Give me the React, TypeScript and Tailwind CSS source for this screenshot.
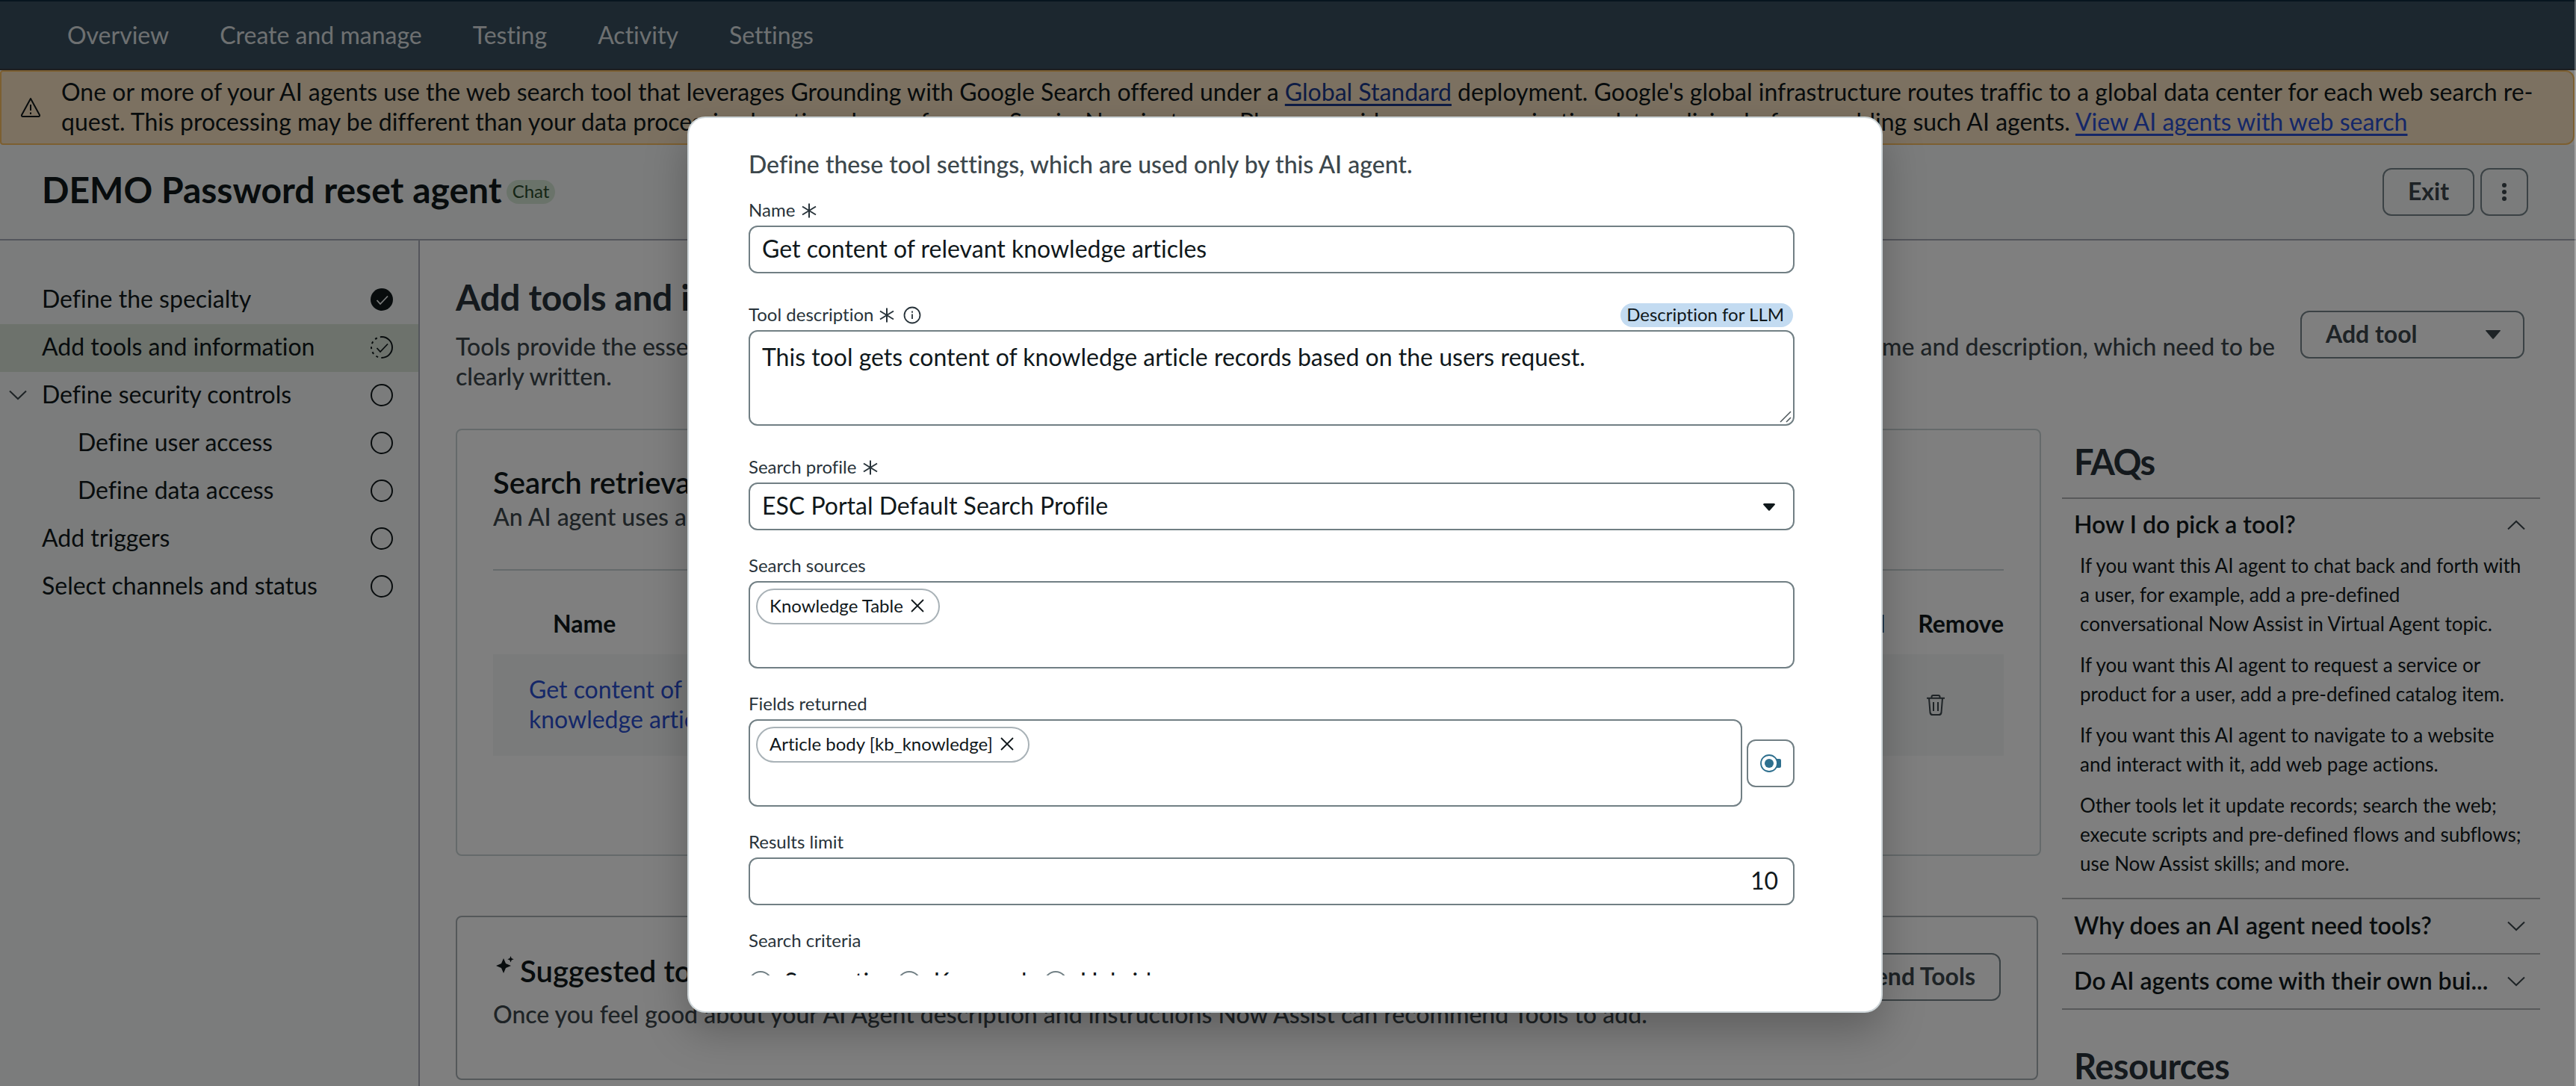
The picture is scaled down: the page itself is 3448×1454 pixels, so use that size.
import type { ReactNode } from "react";
import clsx from "clsx";

const NAV_ITEMS = ["Overview", "Create and manage", "Testing", "Activity", "Settings"];

type StepStatus = "done" | "current" | "todo";

const STEPS: { label: string; status: StepStatus; child?: boolean; expandable?: boolean }[] = [
	{ label: "Define the specialty", status: "done" },
	{ label: "Add tools and information", status: "current" },
	{ label: "Define security controls", status: "todo", expandable: true },
	{ label: "Define user access", status: "todo", child: true },
	{ label: "Define data access", status: "todo", child: true },
	{ label: "Add triggers", status: "todo" },
	{ label: "Select channels and status", status: "todo" },
];

const FAQ_ANSWER = [
	["If you want this AI agent to chat back and forth with", "a user, for example, add a pre-defined", "conversational Now Assist in Virtual Agent topic."],
	["If you want this AI agent to request a service or", "product for a user, add a pre-defined catalog item."],
	["If you want this AI agent to navigate to a website", "and interact with it, add web page actions."],
	["Other tools let it update records; search the web;", "execute scripts and pre-defined flows and subflows;", "use Now Assist skills; and more."],
];

function StatusIcon({ status }: { status: StepStatus }) {
	return (
		<svg className="size-[30px]" viewBox="0 0 30 30" fill="none">
			{status === "done" && <circle cx="15" cy="15" r="15" fill="#10181b" />}
			{status === "todo" && <circle cx="15" cy="15" r="14" stroke="#10181b" strokeWidth="2" />}
			{status === "current" && (
				<>
					<path d="M15 1a14 14 0 0 1 0 28" stroke="#10181b" strokeWidth="2" />
					<path d="M15 29a14 14 0 0 1 0-28" stroke="#10181b" strokeWidth="2" strokeDasharray="3 4.3" strokeDashoffset="-5" />
				</>
			)}
			{status !== "todo" && (
				<path d="M8.500 16l4.500 5 10-10.500" stroke={status === "done" ? "#f6f9f8" : "#10181b"} strokeWidth="1.800" />
			)}
		</svg>
	);
}

function Chevron({ up = false }: { up?: boolean }) {
	return (
		<svg className={clsx("h-3.5 w-6 shrink-0", up && "rotate-180")} viewBox="0 0 24 14" fill="none">
			<path d="M1 1.500l11 10.500 11-10.500" stroke="#3c474c" strokeWidth="2" />
		</svg>
	);
}

function Asterisk() {
	return (
		<svg className="mt-px size-5" viewBox="0 0 20 20" fill="none" stroke="#28333a" strokeWidth="2">
			<path d="M10 .5v19M1 4.500l18 11M19 4.500l-18 11" />
		</svg>
	);
}

function Header() {
	return (
		<>
			<nav className="flex h-[94px] items-center gap-[68px] border-y-2 border-t-[#0e2a3e] border-b-[#363b3f] bg-[#384f5e] pl-[90px] text-[32px] text-[#dce0e3]">
				{NAV_ITEMS.map((item) => (
					<span key={item}>{item}</span>
				))}
			</nav>
			<div className="mr-0.5 flex h-[100px] items-center rounded-l-sm rounded-r-xl border-2 border-[#f9bf63] bg-[#f9e3c3] pl-[25px] text-[32px] leading-10 text-[#10181b]">
				<svg className="mr-[27px] size-7 shrink-0" viewBox="0 0 28 28" fill="none" stroke="#10181b" strokeWidth="2">
					<path d="M14 2l12 22q.5 2-1.500 2h-21q-2 0-1.500-2z" strokeLinejoin="round" />
					<path d="M14 10v8M14 20.500v2.500" />
				</svg>
				<p className="pb-[3px] whitespace-nowrap">
					One or more of your AI agents use the web search tool that leverages Grounding with Google Search offered under a{" "}
					<a className="text-[#1c3a8c] underline decoration-[3px] underline-offset-4">Global Standard</a> deployment. Google's global infrastructure routes traffic to a global data center for each web search re-
					<br />
					quest. This processing may be different than your data processing location chosen for your ServiceNow instance. Please provide any communication data policies before enabling such AI agents.{" "}
					<a className="text-[#2a4fd0] underline decoration-[3px] underline-offset-4">View AI agents with web search</a>
				</p>
			</div>
			<div className="flex h-32 items-center border-b-2 border-[#a9adb9] bg-[#f6f9f8] pr-16 pl-14">
				<h1 className="pb-1.5 text-[48px] font-bold text-[#10181b]">DEMO Password reset agent</h1>
				<span className="ml-1.5 flex h-8 items-center rounded-2xl bg-[#d5e6d5] px-2 pb-0.5 text-[24px] text-[#2b4a2c]">Chat</span>
				<button className="ml-auto h-16 w-[123px] rounded-xl border-2 border-[#76848a] pb-[3px] text-[32px] font-bold text-[#3c474c]">Exit</button>
				<button className="ml-2 flex size-16 items-center justify-center rounded-xl border-2 border-[#76848a]">
					<svg className="h-6 w-2" viewBox="0 0 8 24" fill="#3c474c">
						<circle cx="4" cy="3" r="3" />
						<circle cx="4" cy="12" r="3" />
						<circle cx="4" cy="21" r="3" />
					</svg>
				</button>
			</div>
		</>
	);
}

function Sidebar() {
	return (
		<aside className="w-[562px] shrink-0 border-r-2 border-[#a9adb9] bg-[#f6f9f8] pt-12">
			{STEPS.map((step) => (
				<div
					key={step.label}
					className={clsx("flex h-16 items-center pr-[34px] pb-0.5 text-[32px] text-[#10181b]", step.status === "current" && "bg-[#dae5d8]")}
				>
					<div className="flex w-14 shrink-0 pl-3">{step.expandable && <Chevron />}</div>
					<span className={clsx("pb-[3px] whitespace-nowrap", step.child && "pl-12")}>{step.label}</span>
					<div className="ml-auto">
						<StatusIcon status={step.status} />
					</div>
				</div>
			))}
		</aside>
	);
}

function ToolsCard() {
	return (
		<section className="mt-[54px] h-[572px] w-[2122px] rounded-lg border-2 border-[#cbd5d6] px-12 pt-11">
			<h3 className="text-[40px] leading-[52px] font-semibold text-[#10181b]">Search retrieval</h3>
			<p className="text-[32px] leading-10 font-medium text-[#3c474c]">An AI agent uses a search retrieval to find information.</p>
			<div className="mt-[50px] border-t-2 border-[#cbd5d6]" />
			<div className="flex h-[112px] items-center pt-[30px] pl-20 text-[32px] font-bold text-[#10181b]">
				<span>Name</span>
				<span className="mr-[44px] ml-auto">Channel</span>
				<span>Remove</span>
			</div>
			<div className="flex h-[136px] items-center bg-[#f4f7f7] pr-[79px] pl-12">
				<a className="pb-[3px] text-[32px] leading-10 text-[#2a4fd0]">
					Get content of relevant
					<br />
					knowledge articles
				</a>
				<svg className="ml-auto h-7 w-6" viewBox="0 0 24 28" fill="none" stroke="#3c474c" strokeWidth="2">
					<path d="M0 4.800h24M6.500 4.500v-1.500q0-2 2-2h7q2 0 2 2v1.500M3 5l1.500 19q.4 3 3.500 3h8q3.100 0 3.500-3l1.500-19M9 10v12M15 10v12" />
				</svg>
			</div>
		</section>
	);
}

function SuggestedCard() {
	return (
		<section className="mt-20 flex h-[220px] w-[2118px] justify-between rounded-lg border-2 border-[#a9b0b5] px-12 pt-[46px]">
			<div>
				<h3 className="flex text-[40px] leading-[52px] font-semibold text-[#10181b]">
					<svg className="mt-1.5 mr-2 ml-1 size-6" viewBox="0 0 24 24" fill="#10181b">
						<path d="M10 3l3 7 7 3-7 3-3 7-3-7-7-3 7-3zM19.500 0l1.200 3 3 1.200-3 1.200-1.200 3-1.200-3-3-1.200 3-1.200z" />
					</svg>
					Suggested tools
				</h3>
				<p className="mt-3 text-[32px] leading-10 font-medium whitespace-nowrap text-[#3c474c]">
					Once you feel good about your AI Agent description and instructions Now Assist can recommend Tools to add.
				</p>
			</div>
			<button className="mt-0.5 h-16 shrink-0 rounded-xl border-2 border-[#76848a] px-8 pb-[3px] text-[32px] font-bold text-[#3c474c]">Recommend Tools</button>
		</section>
	);
}

function FaqRow({ title, open = false }: { title: string; open?: boolean }) {
	return (
		<div className={clsx("flex items-center justify-between pr-5 pl-4", open ? "h-[70px]" : "h-[72px]")}>
			<span className="pb-0.5 text-[32px] font-semibold whitespace-nowrap text-[#10181b]">{title}</span>
			<Chevron up={open} />
		</div>
	);
}

function Faqs() {
	return (
		<aside className="ml-[28px] w-[640px] pt-[69px]">
			<h2 className="pl-4 text-[47px] leading-[58px] font-bold tracking-[-1.5px] text-[#28333a]">FAQs</h2>
			<div className="mt-[19px] border-y-2 border-[#b0b3b5]">
				<FaqRow title="How I do pick a tool?" open />
				<div className="flex h-[464px] flex-col gap-4 pl-6 text-[26px] leading-[39px] whitespace-nowrap text-[#10181b]">
					{FAQ_ANSWER.map((lines) => (
						<p key={lines[0]}>
							{lines.map((line) => (
								<span key={line} className="block">
									{line}
								</span>
							))}
						</p>
					))}
				</div>
			</div>
			<div className="border-b-2 border-[#b0b3b5]">
				<FaqRow title="Why does an AI agent need tools?" />
			</div>
			<div className="border-b-2 border-[#b0b3b5]">
				<FaqRow title="Do AI agents come with their own bui..." />
			</div>
			<h2 className="mt-[46px] pl-4 text-[47px] leading-[58px] font-bold tracking-[-0.5px] text-[#28333a]">Resources</h2>
		</aside>
	);
}

function Label({ children }: { children: ReactNode }) {
	return <div className="flex h-9 items-center pb-1.5 text-[24px] whitespace-nowrap text-[#28333a]">{children}</div>;
}

function Chip({ children }: { children: ReactNode }) {
	return (
		<span className="flex h-12 items-center gap-2.5 rounded-full border-2 border-[#a9b2b7] pr-[19px] pb-0.5 pl-4 text-[24px] text-[#10181b]">
			{children}
			<svg className="size-[18px]" viewBox="0 0 18 18" fill="none" stroke="#10181b" strokeWidth="1.800">
				<path d="M1 1l16 16M17 1l-16 16" />
			</svg>
		</span>
	);
}

function ToolSettingsModal() {
	return (
		<div className="absolute top-[156px] left-[920px] h-[1200px] w-[1600px] rounded-3xl border-2 border-[#cdd5d8] bg-white pt-[42px] pl-20 shadow-[0_24px_56px_rgba(0,0,0,0.25)]">
			<div className="h-[1106px] w-[1400px] overflow-hidden">
				<p className="text-[32px] leading-10 font-medium text-[#3c474c]">Define these tool settings, which are used only by this AI agent.</p>

				<div className="mt-[26px]">
					<Label>
						Name
						<span className="ml-[9px]">
							<Asterisk />
						</span>
					</Label>
					<div className="flex h-16 items-center rounded-xl border-2 border-[#717f84] px-4 pb-[3px] text-[32px] text-[#10181b]">Get content of relevant knowledge articles</div>
				</div>

				<div className="mt-10">
					<div className="flex justify-between">
						<Label>
							Tool description
							<span className="mr-3 ml-2">
								<Asterisk />
							</span>
							<svg className="mt-px size-6" viewBox="0 0 24 24" fill="none" stroke="#28333a" strokeWidth="1.800">
								<circle cx="12" cy="12" r="10.500" />
								<path d="M12 10.500v6.500M12 6.500v2.200" />
							</svg>
						</Label>
						<span className="mr-0.5 flex h-8 items-center rounded-full bg-[#c3dbf1] pr-3 pb-0.5 pl-2 text-[24px] text-[#10181b]">Description for LLM</span>
					</div>
					<div className="relative h-32 rounded-xl border-2 border-[#717f84] px-4 pt-3.5 text-[32px] leading-10 text-[#10181b]">
						This tool gets content of knowledge article records based on the users request.
						<svg className="absolute right-0.5 bottom-0.5 size-4" viewBox="0 0 16 16" stroke="#4b5559" strokeWidth="1.500">
							<path d="M1 15L15 1M9 15l6-6" />
						</svg>
					</div>
				</div>

				<div className="mt-10">
					<Label>
						Search profile
						<span className="ml-[9px]">
							<Asterisk />
						</span>
					</Label>
					<div className="flex h-16 items-center justify-between rounded-xl border-2 border-[#717f84] pr-6 pb-[3px] pl-4 text-[32px] text-[#10181b]">
						ESC Portal Default Search Profile
						<svg className="mt-1 h-2.5 w-4" viewBox="0 0 16 10" fill="#10181b">
							<path d="M0 1.500q0-1.500 1.500-1.500h13q1.500 0 1.500 1.500l-7 7.800q-1 1-2 0z" />
						</svg>
					</div>
				</div>

				<div className="mt-8">
					<Label>Search sources</Label>
					<div className="flex h-[117px] items-start rounded-xl border-2 border-[#717f84] p-2">
						<Chip>Knowledge Table</Chip>
					</div>
				</div>

				<div className="mt-8">
					<Label>Fields returned</Label>
					<div className="flex items-center gap-1.5">
						<div className="flex h-[117px] flex-1 items-start rounded-xl border-2 border-[#717f84] p-2">
							<Chip>Article body [kb_knowledge]</Chip>
						</div>
						<button className="flex size-16 items-center justify-center rounded-xl border-2 border-[#717f84]">
							<svg className="h-6 w-7" viewBox="0 0 28 24">
								<path d="M20 6h6q2 0 2 2v8q0 2-2 2h-6z" fill="#2e6f8e" />
								<circle cx="12" cy="12" r="11" fill="#fff" stroke="#2e6f8e" strokeWidth="1.800" />
								<circle cx="12" cy="12" r="6" fill="#2e6f8e" />
							</svg>
						</button>
					</div>
				</div>

				<div className="mt-8">
					<Label>Results limit</Label>
					<div className="flex h-16 items-center justify-end rounded-xl border-2 border-[#717f84] px-5 pb-[3px] text-[32px] text-[#10181b]">10</div>
				</div>

				<div className="mt-8">
					<Label>Search criteria</Label>
					<div className="mt-5 flex gap-[23px] text-[32px] leading-7 text-[#10181b]">
						{["Semantic", "Keyword", "Hybrid"].map((option) => (
							<div key={option} className="flex gap-4">
								<span className="size-8 rounded-full border-2 border-[#717f84]" />
								{option}
							</div>
						))}
					</div>
				</div>
			</div>
		</div>
	);
}

export default function App() {
	return (
		<div className="relative flex h-[1454px] w-[3448px] flex-col overflow-hidden bg-white font-['Lato',sans-serif] [font-variant-ligatures:none]">
			<Header />
			<div className="flex min-h-0 flex-1">
				<Sidebar />
				<main className="min-w-0 flex-1 pl-12">
					<div className="flex h-[198px] items-start pt-[47px] pr-[69px]">
						<div className="w-[2435px]">
							<h2 className="text-[48px] leading-[58px] font-bold tracking-[-0.4px] text-[#28333a]">Add tools and information</h2>
							<div className="mt-[17px] text-[32px] leading-10 font-medium whitespace-nowrap text-[#3c474c]">
								<p className="flex justify-between">
									<span>Tools provide the essential capabilities an AI agent uses to complete tasks.</span>
									<span>Each tool is selected by its name and description, which need to be</span>
								</p>
								<p>clearly written.</p>
							</div>
						</div>
						<button className="mt-[47px] ml-auto flex h-16 w-[300px] items-center justify-between rounded-xl border-2 border-[#76848a] pr-[30px] pb-[3px] pl-8 text-[32px] font-bold text-[#3c474c]">
							Add tool
							<svg className="mt-0.5 h-3 w-5" viewBox="0 0 20 12" fill="#3c474c">
								<path d="M0 .8q0-.8.8-.8h18.400q.8 0 .8.800l-9 10.400q-1 1-2 0z" />
							</svg>
						</button>
					</div>
					<div className="flex">
						<div>
							<ToolsCard />
							<SuggestedCard />
						</div>
						<Faqs />
					</div>
				</main>
			</div>
			<div className="absolute inset-0 bg-black/50" />
			<div className="absolute inset-y-0 right-0 w-0.5 bg-white/30" />
			<ToolSettingsModal />
		</div>
	);
}
